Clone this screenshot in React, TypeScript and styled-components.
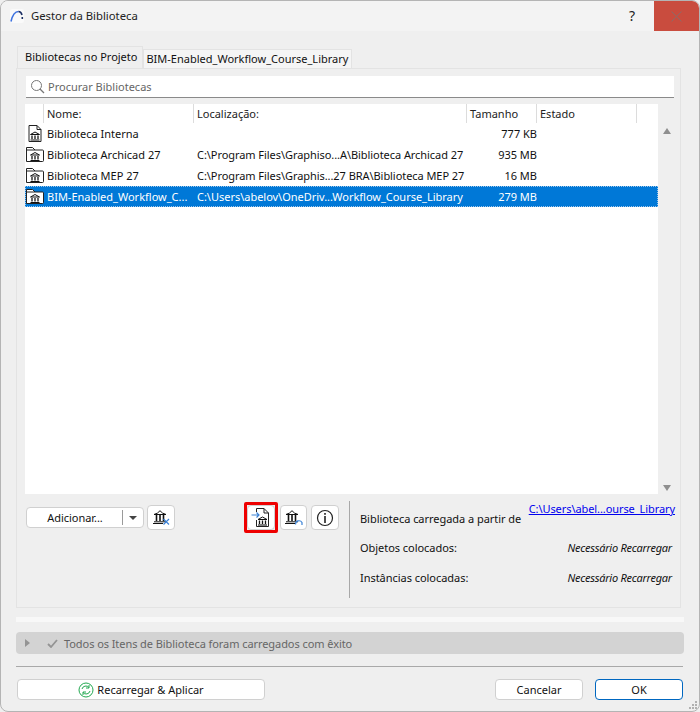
import React, { FC } from 'react';
import styled, { createGlobalStyle } from 'styled-components';

const GlobalStyle = createGlobalStyle`
  html, body {
    margin: 0;
    padding: 0;
    background: #efefef;
  }
  * {
    box-sizing: border-box;
  }
`;

const Dialog = styled.div`
  width: 700px;
  height: 712px;
  display: flex;
  flex-direction: column;
  position: relative;
  background: #efefef;
  border: 1px solid #b4b4b4;
  border-radius: 8px;
  overflow: hidden;
  font-family: 'Noto Sans', 'Open Sans', sans-serif;
  font-size: 11px;
  color: #111;
`;

const TitleBar = styled.div`
  height: 30px;
  flex: none;
  display: flex;
  align-items: center;
  padding: 0 0 1px 9px;
  font-size: 11.3px;
  color: #222;
  background: #f3f3f3;
`;

const LogoBox = styled.div`
  width: 14px;
  height: 14px;
  background: #fafafa;
  border-radius: 2px;
  display: flex;
`;

const TitleText = styled.span`
  margin-left: 7px;
  flex: 1;
`;

const HelpMark = styled.span`
  width: 46px;
  text-align: center;
  font-size: 14px;
  margin-right: -1px;
`;

const CloseBox = styled.div`
  width: 45px;
  height: 30px;
  margin-bottom: -1px;
  background: #c94c3e;
  display: flex;
  align-items: center;
  justify-content: center;
`;

const Content = styled.div`
  padding: 14px 15px 0 15px;
  display: flex;
  flex-direction: column;
  flex: 1;
`;

const TabRow = styled.div`
  display: flex;
  align-items: flex-end;
  height: 23px;
  padding-left: 1px;
`;

const Tab = styled.div<{ $active?: boolean }>`
  height: ${p => (p.$active ? 22 : 19)}px;
  display: flex;
  align-items: center;
  background: ${p => (p.$active ? '#efefef' : '#f5f5f5')};
  border: 1px solid #e3e3e3;
  border-bottom: none;
  padding: 0 ${p => (p.$active ? 5 : 3)}px 2px ${p => (p.$active ? 7 : 2)}px;
  color: #111;
`;

const TabPanel = styled.div`
  height: 540px;
  margin-right: 3px;
  border: 1px solid #e3e3e3;
  padding: 7px 6px 0 5px;
  display: flex;
  flex-direction: column;
`;

const SearchBox = styled.div`
  height: 22px;
  flex: none;
  margin: 0 0 6px 4px;
  background: #fff;
  border-bottom: 1px solid #8a8a8a;
  display: flex;
  align-items: center;
  padding-left: 4px;
  gap: 3px;
  color: #666;
`;

const ListArea = styled.div`
  display: grid;
  grid-template-columns: 633px 18px;
  margin-left: 3px;
  flex: none;
`;

const ListColumn = styled.div`
  display: flex;
  flex-direction: column;
`;

const columns = '19px 150px 273px 70px 100px 21px';

const HeaderRow = styled.div`
  display: grid;
  grid-template-columns: ${columns};
  height: 19px;
  background: #fff;
`;

const HeaderCell = styled.div`
  border-right: 1px solid #dcdcdc;
  padding: 0 0 1px 3px;
  display: flex;
  align-items: center;
  color: #222;

  &:last-child {
    border-right: none;
  }
`;

const Rows = styled.div`
  height: 371px;
  background: #fff;
`;

const Row = styled.div<{ $selected?: boolean }>`
  display: grid;
  grid-template-columns: ${columns};
  height: 21px;
  align-items: center;
  background: ${p => (p.$selected ? '#0078d7' : 'transparent')};
  color: ${p => (p.$selected ? '#fff' : '#111')};
  outline: ${p => (p.$selected ? '1px dotted #9ec6ea' : 'none')};
  outline-offset: -1px;
`;

const IconCell = styled.div`
  display: flex;
  align-items: center;
  justify-content: center;
  height: 21px;
`;

const TextCell = styled.div`
  padding-left: 3px;
  white-space: nowrap;
  overflow: hidden;
`;

const PathCell = styled(TextCell)<{ $selected?: boolean }>`
  letter-spacing: ${p => (p.$selected ? '-0.02px' : '-0.06px')};
`;

const SizeCell = styled(TextCell)`
  text-align: right;
`;

const ScrollTrack = styled.div`
  padding-top: 19px;
  display: flex;
  flex-direction: column;
  align-items: center;
  justify-content: space-between;
  height: 390px;
`;

const ScrollArrow = styled.div<{ $down?: boolean }>`
  width: 0;
  height: 0;
  margin: ${p => (p.$down ? '0 0 3px' : '5px 0 0')};
  border-left: 4px solid transparent;
  border-right: 4px solid transparent;
  border-bottom: ${p => (p.$down ? 'none' : '6px solid #8f8f8f')};
  border-top: ${p => (p.$down ? '6px solid #8f8f8f' : 'none')};
`;

const LowerPart = styled.div`
  display: flex;
  flex: 1;
  padding-top: 7px;
`;

const ToolsSide = styled.div`
  width: 327px;
  flex: none;
  display: flex;
  align-items: flex-start;
  padding: 4px 0 0 4px;
`;

const SplitButton = styled.div`
  width: 118px;
  height: 21px;
  margin-top: 2px;
  background: #fff;
  border: 1px solid #d0d0d0;
  border-radius: 4px;
  display: flex;
  align-items: center;
`;

const SplitLabel = styled.div`
  flex: 1;
  text-align: center;
  padding-left: 1px;
  letter-spacing: -0.05px;
`;

const SplitArrow = styled.div`
  width: 21px;
  height: 15px;
  border-left: 1px solid #9a9a9a;
  display: flex;
  align-items: center;
  justify-content: center;

  &::after {
    content: '';
    border-left: 4px solid transparent;
    border-right: 4px solid transparent;
    border-top: 4px solid #444;
  }
`;

const IconButton = styled.div`
  width: 28px;
  height: 25px;
  background: #fff;
  border: 1px solid #d0d0d0;
  border-radius: 4px;
  display: flex;
  align-items: center;
  justify-content: center;
  flex: none;
`;

const Highlight = styled.div`
  flex: none;
  width: 34px;
  height: 31px;
  margin: -3px 2px 0 69px;
  border: 3px solid #ee0000;
  border-radius: 2px;
`;

const RemoveButton = styled(IconButton)`
  margin-left: 3px;
`;

const RefreshButton = styled(IconButton)`
  width: 27px;
`;

const InfoButton = styled(IconButton)`
  margin-left: 4px;
`;

const InfoSide = styled.div`
  width: 323px;
  height: 97px;
  border-left: 1px solid #a8a8a8;
  padding: 0 0 0 10px;
  display: flex;
  flex-direction: column;
`;

const InfoRow = styled.div`
  height: 30px;
  display: flex;
  align-items: center;
  justify-content: space-between;
  letter-spacing: -0.04px;
`;

const FirstInfoRow = styled(InfoRow)`
  height: 31px;
  padding-top: 3px;
  position: relative;
`;

const PathLink = styled.a`
  position: absolute;
  right: -3px;
  top: 0;
  color: #0000ee;
  text-decoration: underline;
  letter-spacing: -0.08px;
`;

const InfoValue = styled.span`
  font-style: italic;
  letter-spacing: -0.25px;
`;

const Strip = styled.div`
  height: 5px;
  margin-top: 9px;
  background: #f8f8f8;
`;

const StatusBar = styled.div`
  height: 22px;
  margin-top: 10px;
  background: #d3d3d3;
  border-radius: 4px;
  display: flex;
  align-items: center;
  padding-left: 9px;
  color: #666;
`;

const Triangle = styled.div`
  border-top: 4px solid transparent;
  border-bottom: 4px solid transparent;
  border-left: 5px solid #949494;
  margin-right: 17px;
`;

const StatusText = styled.span`
  margin-left: 6px;
  letter-spacing: -0.07px;
`;

const Separator = styled.div`
  height: 1px;
  margin: 12px 1px 0 0;
  background: #a9a9a9;
`;

const Footer = styled.div`
  display: flex;
  margin-top: 12px;
  padding: 0 1px;
`;

const DialogButton = styled.div<{ $primary?: boolean; $width: number }>`
  width: ${p => p.$width}px;
  height: 21px;
  background: #fff;
  border: 1px solid ${p => (p.$primary ? '#0067c0' : '#d0d0d0')};
  border-radius: 4px;
  display: flex;
  align-items: center;
  justify-content: center;
  gap: 3px;
  color: #111;
`;

const FooterSpacer = styled.div`
  flex: 1;
`;

const OkWrap = styled.div`
  margin-left: 12px;
`;

const Grip = styled.svg`
  position: absolute;
  right: 1px;
  bottom: 1px;
`;

// small temple used in the list rows, 9 wide
const Temple: FC<{ x: number; y: number }> = ({ x, y }) => (
  <g transform={`translate(${x} ${y})`}>
    <path d="M5 .5L9.5 3H.5Z" fill="#fff" stroke="#111" strokeWidth="1" />
    <path d="M2 4V7.5M5 4V7.5M8 4V7.5" stroke="#111" strokeWidth="1.3" />
    <path d="M.5 8.5H9.5" stroke="#111" strokeWidth="1.1" />
  </g>
);

// bigger temple for the toolbar buttons
const BigTemple: FC<{ x: number; y: number }> = ({ x, y }) => (
  <g transform={`translate(${x} ${y})`} fill="none" stroke="#111">
    <path d="M1 4.5Q5 3.5 7 .7Q9 3.5 13 4.5Z" strokeWidth="1" />
    <path d="M3.5 5V11M7 5V11M10.5 5V11" strokeWidth="1.6" />
    <path d="M1 11.8H13M0 13.5H10" strokeWidth="1" />
  </g>
);

const FileIcon: FC = () => (
  <svg width="14" height="17" viewBox="0 0 14 17">
    <path d="M1 .5H9L13 4.5V16.5H1Z M9 .5V4.5H13" fill="#fff" stroke="#222" />
    <Temple x={2} y={6.5} />
  </svg>
);

const FolderIcon: FC = () => (
  <svg width="18" height="15" viewBox="0 0 18 15">
    <path d="M.5 14.5V.5H6.5L9 3H16.5Q17.5 3 17.5 4V13.5Q17.5 14.5 16.5 14.5Z" fill="#fff" stroke="#222" />
    <path d="M.5 3H9" stroke="#222" />
    <Temple x={4} y={5} />
  </svg>
);

const ListRow: FC<{ icon: React.ReactNode; name: string; path?: string; size: string; selected?: boolean }> = ({
  icon,
  name,
  path,
  size,
  selected,
}) => (
  <Row $selected={selected}>
    <IconCell>{icon}</IconCell>
    <TextCell>{name}</TextCell>
    <PathCell $selected={selected}>{path}</PathCell>
    <SizeCell>{size}</SizeCell>
  </Row>
);

const App: FC = () => (
  <>
    <GlobalStyle />
    <Dialog>
      <TitleBar>
        <LogoBox>
          <svg width="14" height="14" viewBox="0 0 14 14">
            <path d="M1 12.5C2.5 6 5.5 2.5 8.5 2.5" fill="none" stroke="#3f73e0" strokeWidth="1.6" />
            <path d="M8.5 2.5C10.5 2.5 11.5 4 12 6M12.3 8V10" fill="none" stroke="#1c2f63" strokeWidth="1.6" />
          </svg>
        </LogoBox>
        <TitleText>Gestor da Biblioteca</TitleText>
        <HelpMark>?</HelpMark>
        <CloseBox>
          <svg width="11" height="11" viewBox="0 0 11 11">
            <path d="M.5 .5L10.5 10.5M10.5 .5L.5 10.5" stroke="#8c6a66" strokeWidth="1" />
          </svg>
        </CloseBox>
      </TitleBar>
      <Content>
        <TabRow>
          <Tab $active>Bibliotecas no Projeto</Tab>
          <Tab>BIM-Enabled_Workflow_Course_Library</Tab>
        </TabRow>
        <TabPanel>
          <SearchBox>
            <svg width="15" height="15" viewBox="0 0 15 15">
              <circle cx="6.5" cy="6.5" r="5" fill="none" stroke="#777" />
              <path d="M10 10L14 14" stroke="#777" strokeWidth="1.2" />
            </svg>
            Procurar Bibliotecas
          </SearchBox>
          <ListArea>
            <ListColumn>
              <HeaderRow>
                <HeaderCell />
                <HeaderCell>Nome:</HeaderCell>
                <HeaderCell>Localização:</HeaderCell>
                <HeaderCell>Tamanho</HeaderCell>
                <HeaderCell>Estado</HeaderCell>
                <HeaderCell />
              </HeaderRow>
              <Rows>
                <ListRow icon={<FileIcon />} name="Biblioteca Interna" size="777 KB" />
                <ListRow
                  icon={<FolderIcon />}
                  name="Biblioteca Archicad 27"
                  path="C:\Program Files\Graphiso...A\Biblioteca Archicad 27"
                  size="935 MB"
                />
                <ListRow
                  icon={<FolderIcon />}
                  name="Biblioteca MEP 27"
                  path="C:\Program Files\Graphis...27 BRA\Biblioteca MEP 27"
                  size="16 MB"
                />
                <ListRow
                  selected
                  icon={<FolderIcon />}
                  name="BIM-Enabled_Workflow_C..."
                  path="C:\Users\abelov\OneDriv...Workflow_Course_Library"
                  size="279 MB"
                />
              </Rows>
            </ListColumn>
            <ScrollTrack>
              <ScrollArrow />
              <ScrollArrow $down />
            </ScrollTrack>
          </ListArea>
          <LowerPart>
            <ToolsSide>
              <SplitButton>
                <SplitLabel>Adicionar...</SplitLabel>
                <SplitArrow />
              </SplitButton>
              <RemoveButton>
                <svg width="20" height="17" viewBox="0 0 20 17">
                  <BigTemple x={2} y={1} />
                  <path d="M12.5 10L18 15.5M18 10L12.5 15.5" stroke="#3b82d6" strokeWidth="1.2" />
                </svg>
              </RemoveButton>
              <Highlight>
                <IconButton>
                  <svg width="20" height="19" viewBox="0 0 20 19">
                    <path d="M5.5 4V.5H13L17.5 5V18.5H5.5V12" fill="none" stroke="#222" />
                    <path d="M13 .5V5H17.5" fill="none" stroke="#222" />
                    <path d="M.5 7H8M5.5 4.5L8 7L5.5 9.5" fill="none" stroke="#3b82d6" strokeWidth="1.2" />
                    <Temple x={6.5} y={8.5} />
                  </svg>
                </IconButton>
              </Highlight>
              <RefreshButton>
                <svg width="20" height="17" viewBox="0 0 20 17">
                  <BigTemple x={1} y={1} />
                  <path d="M11.5 15.5A3.5 3.5 0 0 1 18 13.5V16" fill="none" stroke="#3b82d6" strokeWidth="1.2" />
                </svg>
              </RefreshButton>
              <InfoButton>
                <svg width="18" height="18" viewBox="0 0 18 18">
                  <circle cx="9" cy="9" r="7.5" fill="none" stroke="#222" strokeWidth="1.2" />
                  <rect x="8.2" y="4" width="1.6" height="1.8" fill="#222" />
                  <rect x="8.2" y="7" width="1.6" height="7" fill="#222" />
                </svg>
              </InfoButton>
            </ToolsSide>
            <InfoSide>
              <FirstInfoRow>
                <span>Biblioteca carregada a partir de</span>
                <PathLink href="#">C:\Users\abel...ourse_Library</PathLink>
              </FirstInfoRow>
              <InfoRow>
                <span>Objetos colocados:</span>
                <InfoValue>Necessário Recarregar</InfoValue>
              </InfoRow>
              <InfoRow>
                <span>Instâncias colocadas:</span>
                <InfoValue>Necessário Recarregar</InfoValue>
              </InfoRow>
            </InfoSide>
          </LowerPart>
        </TabPanel>
        <Strip />
        <StatusBar>
          <Triangle />
          <svg width="11" height="9" viewBox="0 0 11 9">
            <path d="M1 5L4 8L10 1" fill="none" stroke="#949494" strokeWidth="1.8" />
          </svg>
          <StatusText>Todos os Itens de Biblioteca foram carregados com êxito</StatusText>
        </StatusBar>
        <Separator />
        <Footer>
          <DialogButton $width={248}>
            <svg width="16" height="16" viewBox="0 0 16 16">
              <circle cx="8" cy="8" r="7" fill="#fff" stroke="#22a850" />
              <path d="M4 7A4 4 0 0 1 11 5.5M11 3V6H8M12 9A4 4 0 0 1 5 10.5M5 13V10H8" fill="none" stroke="#22a850" />
            </svg>
            Recarregar &amp; Aplicar
          </DialogButton>
          <FooterSpacer />
          <DialogButton $width={88}>Cancelar</DialogButton>
          <OkWrap>
            <DialogButton $width={88} $primary>
              OK
            </DialogButton>
          </OkWrap>
        </Footer>
      </Content>
      <Grip width="11" height="11" viewBox="0 0 11 11" fill="#b0b0b0">
        <rect x="8" y="2" width="2" height="2" />
        <rect x="5" y="5" width="2" height="2" />
        <rect x="8" y="5" width="2" height="2" />
        <rect x="2" y="8" width="2" height="2" />
        <rect x="5" y="8" width="2" height="2" />
        <rect x="8" y="8" width="2" height="2" />
      </Grip>
    </Dialog>
  </>
);

export default App;
